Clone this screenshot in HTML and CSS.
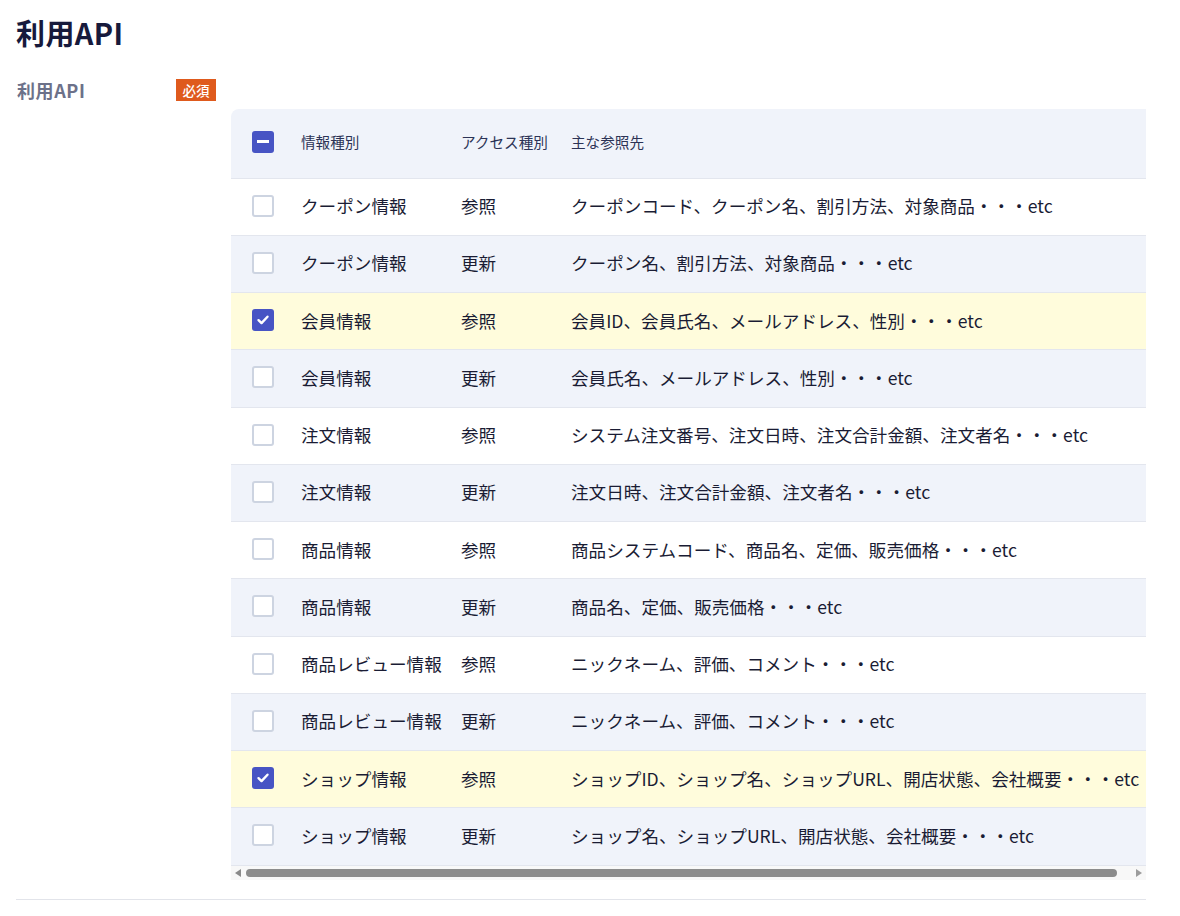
FILE: index.html
```html
<!DOCTYPE html>
<html lang="ja">
<head>
<meta charset="utf-8">
<title>利用API</title>
<link rel="stylesheet" href="styles.css">
</head>
<body>
<main class="page">
  <h1 class="title">利用API</h1>
  <section class="field">
    <div class="field-label">
      <span class="label-text">利用API</span>
      <span class="badge">必須</span>
    </div>
    <div class="field-body">
      <div class="table-scroll">
        <table class="api-table">
          <colgroup>
            <col class="c-check"><col class="c-type"><col class="c-access"><col class="c-ref">
          </colgroup>
          <thead>
            <tr>
              <th class="cell-check"><span class="box box-on"><span class="dash"></span></span></th>
              <th>情報種別</th>
              <th>アクセス種別</th>
              <th>主な参照先</th>
            </tr>
          </thead>
          <tbody>
            <tr class="r-white"><td class="cell-check"><span class="box"></span></td><td>クーポン情報</td><td>参照</td><td>クーポンコード、クーポン名、割引方法、対象商品・・・etc</td></tr>
            <tr class="r-blue"><td class="cell-check"><span class="box"></span></td><td>クーポン情報</td><td>更新</td><td>クーポン名、割引方法、対象商品・・・etc</td></tr>
            <tr class="r-checked"><td class="cell-check"><span class="box box-on"><svg viewBox="0 0 22 22" width="22" height="22"><path d="M6.5 11.2l3 2.9 6-6.4" fill="none" stroke="#fff" stroke-width="2.4" stroke-linecap="round" stroke-linejoin="round"/></svg></span></td><td>会員情報</td><td>参照</td><td>会員ID、会員氏名、メールアドレス、性別・・・etc</td></tr>
            <tr class="r-blue"><td class="cell-check"><span class="box"></span></td><td>会員情報</td><td>更新</td><td>会員氏名、メールアドレス、性別・・・etc</td></tr>
            <tr class="r-white"><td class="cell-check"><span class="box"></span></td><td>注文情報</td><td>参照</td><td>システム注文番号、注文日時、注文合計金額、注文者名・・・etc</td></tr>
            <tr class="r-blue"><td class="cell-check"><span class="box"></span></td><td>注文情報</td><td>更新</td><td>注文日時、注文合計金額、注文者名・・・etc</td></tr>
            <tr class="r-white"><td class="cell-check"><span class="box"></span></td><td>商品情報</td><td>参照</td><td>商品システムコード、商品名、定価、販売価格・・・etc</td></tr>
            <tr class="r-blue"><td class="cell-check"><span class="box"></span></td><td>商品情報</td><td>更新</td><td>商品名、定価、販売価格・・・etc</td></tr>
            <tr class="r-white"><td class="cell-check"><span class="box"></span></td><td>商品レビュー情報</td><td>参照</td><td>ニックネーム、評価、コメント・・・etc</td></tr>
            <tr class="r-blue"><td class="cell-check"><span class="box"></span></td><td>商品レビュー情報</td><td>更新</td><td>ニックネーム、評価、コメント・・・etc</td></tr>
            <tr class="r-checked"><td class="cell-check"><span class="box box-on"><svg viewBox="0 0 22 22" width="22" height="22"><path d="M6.5 11.2l3 2.9 6-6.4" fill="none" stroke="#fff" stroke-width="2.4" stroke-linecap="round" stroke-linejoin="round"/></svg></span></td><td>ショップ情報</td><td>参照</td><td>ショップID、ショップ名、ショップURL、開店状態、会社概要・・・etc</td></tr>
            <tr class="r-blue"><td class="cell-check"><span class="box"></span></td><td>ショップ情報</td><td>更新</td><td>ショップ名、ショップURL、開店状態、会社概要・・・etc</td></tr>
          </tbody>
        </table>
      </div>
      <div class="scrollbar" aria-hidden="true">
        <span class="arrow arrow-left"></span>
        <span class="track"><span class="thumb"></span></span>
        <span class="arrow arrow-right"></span>
      </div>
    </div>
  </section>
  <hr class="divider">
</main>
</body>
</html>
```

FILE: styles.css
```css
* { box-sizing: border-box; }

html, body {
  margin: 0;
  padding: 0;
  background: #ffffff;
}

body {
  font-family: "Noto Sans CJK JP", "Noto Sans", sans-serif;
  color: #1b1d33;
}

.page {
  width: 1146px;
  padding: 12px 0 0 16px;
}

.title {
  margin: 0;
  font-size: 29px;
  line-height: 40px;
  font-weight: 700;
  color: #171a3c;
  letter-spacing: 0.4px;
}

.field {
  display: grid;
  grid-template-columns: 200px 915px;
  column-gap: 15px;
  margin-top: 27px;
}

.field-label {
  display: flex;
  align-items: center;
  justify-content: space-between;
  height: 22px;
}

.label-text {
  font-size: 18px;
  font-weight: 700;
  color: #6c7189;
  letter-spacing: 0.6px;
  padding-left: 1px;
}

.badge {
  display: inline-flex;
  align-items: center;
  justify-content: center;
  width: 40px;
  height: 22px;
  background: #df5a1d;
  color: #ffffff;
  font-size: 13.5px;
  font-weight: 500;
}

.field-body {
  padding-top: 30px;
}

.table-scroll {
  width: 915px;
  overflow: hidden;
}

.api-table {
  width: 937px;
  table-layout: fixed;
  border-collapse: collapse;
}

.c-check { width: 70px; }
.c-type { width: 160px; }
.c-access { width: 110px; }
.c-ref { width: 597px; }

.api-table th,
.api-table td {
  padding: 0;
  text-align: left;
  white-space: nowrap;
  vertical-align: middle;
}

.api-table th {
  height: 69px;
  padding-bottom: 3px;
  background: #f0f3fa;
  font-size: 14.6px;
  font-weight: 400;
  color: #2c3356;
  border-bottom: 1px solid #e3e6ee;
}

.api-table thead th:first-child {
  border-top-left-radius: 8px;
}

.api-table td {
  height: 57.25px;
  padding-bottom: 2px;
  font-size: 17.6px;
  color: #1a1c34;
  border-bottom: 1px solid #e3e6ee;
}

.cell-check {
  padding-left: 21px !important;
}

.r-white td { background: #ffffff; }
.r-blue td { background: #f0f3fa; }
.r-checked td { background: #fffcdc; }

.box {
  display: flex;
  align-items: center;
  justify-content: center;
  width: 22px;
  height: 22px;
  border: 2px solid #cdd4e1;
  border-radius: 3px;
  background: #ffffff;
}

.box-on {
  border: none;
  background: #4754c4;
}

.dash {
  display: block;
  width: 12px;
  height: 3px;
  background: #ffffff;
}

.scrollbar {
  display: flex;
  align-items: center;
  width: 915px;
  height: 14px;
  background: #f8f8f8;
}

.arrow {
  flex: none;
  width: 14px;
  height: 14px;
  display: flex;
  align-items: center;
  justify-content: center;
}

.arrow::before {
  content: "";
  display: block;
  width: 0;
  height: 0;
  border-top: 4px solid transparent;
  border-bottom: 4px solid transparent;
}

.arrow-left::before {
  border-right: 6px solid #8a8a8a;
}

.arrow-right::before {
  border-left: 6px solid #9c9c9c;
}

.track {
  flex: 1;
  height: 14px;
  display: flex;
  align-items: center;
}

.thumb {
  display: block;
  margin-left: 1px;
  width: 871px;
  height: 8px;
  border-radius: 4px;
  background: #8c8c8c;
}

.divider {
  margin: 19px 0 0 0;
  border: none;
  border-top: 1px solid #e2e4ea;
  height: 0;
  width: 1130px;
}
```
